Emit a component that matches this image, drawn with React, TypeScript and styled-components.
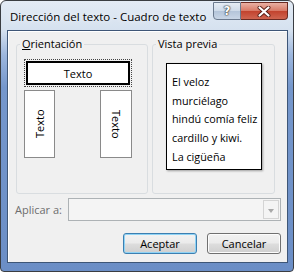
import styled, { createGlobalStyle } from "styled-components";

const GlobalStyle = createGlobalStyle`
  html, body {
    margin: 0;
    padding: 0;
    background: #ffffff;
  }
  body {
    font-family: "Open Sans", "Noto Sans", sans-serif;
    color: #000;
  }
`;

const previewLines = [
  "El veloz",
  "murciélago",
  "hindú comía feliz",
  "cardillo y kiwi.",
  "La cigüeña",
];

function CloseGlyph() {
  return (
    <svg width="14" height="11" viewBox="0 0 14 11">
      <path
        d="M2.5 1.5 L11.5 9.5 M11.5 1.5 L2.5 9.5"
        stroke="#5a2018"
        strokeWidth="4"
        strokeLinecap="round"
        fill="none"
      />
      <path
        d="M2.5 1.5 L11.5 9.5 M11.5 1.5 L2.5 9.5"
        stroke="#ffffff"
        strokeWidth="2.2"
        strokeLinecap="round"
        fill="none"
      />
    </svg>
  );
}

export default function App() {
  return (
    <>
      <GlobalStyle />
      <Window>
        <TitleBar>
          <Title>Dirección del texto - Cuadro de texto</Title>
          <Caption>
            <CaptionButton kind="help">?</CaptionButton>
            <CaptionButton kind="close">
              <CloseGlyph />
            </CaptionButton>
          </Caption>
        </TitleBar>

        <Client>
          <Groups>
            <Group $width={132}>
              <Legend>
                <u>O</u>rientación
              </Legend>
              <OrientGrid>
                <FocusRing>
                  <HorizontalChoice>Texto</HorizontalChoice>
                </FocusRing>
                <VerticalChoice $dir="up">Texto</VerticalChoice>
                <VerticalChoice $dir="down">Texto</VerticalChoice>
              </OrientGrid>
            </Group>

            <Group $width={123}>
              <Legend>Vista previa</Legend>
              <Preview>
                {previewLines.map((line) => (
                  <PreviewLine key={line}>{line}</PreviewLine>
                ))}
              </Preview>
            </Group>
          </Groups>

          <ApplyRow>
            <ApplyLabel>Aplicar a:</ApplyLabel>
            <Combo>
              <ComboArrow />
            </Combo>
          </ApplyRow>

          <Actions>
            <Button $primary>Aceptar</Button>
            <Button>Cancelar</Button>
          </Actions>
        </Client>
      </Window>
    </>
  );
}

const Window = styled.div`
  width: 294px;
  height: 272px;
  box-sizing: border-box;
  border: 1px solid #3a3d42;
  border-radius: 6px 6px 4px 4px;
  background: linear-gradient(
    180deg,
    #e3ebf5 0%,
    #d5e1ef 11%,
    #9db7de 20%,
    #7597cc 32%,
    #6b8ec6 100%
  );
  display: flex;
  flex-direction: column;
  padding: 0 5px 8px 6px;
  overflow: hidden;
`;

const TitleBar = styled.div`
  height: 29px;
  display: flex;
  justify-content: space-between;
  align-items: flex-start;
  padding-left: 3px;
`;

const Title = styled.div`
  font-size: 11.5px;
  line-height: 16px;
  margin-top: 8px;
  white-space: nowrap;
  text-shadow: 0 0 6px rgba(255, 255, 255, 0.9);
`;

const Caption = styled.div`
  display: flex;
  margin-top: 1px;
`;

const CaptionButton = styled.div<{ kind: "help" | "close" }>`
  width: ${({ kind }) => (kind === "help" ? "28px" : "47px")};
  height: 18px;
  box-sizing: border-box;
  border: 1px solid ${({ kind }) => (kind === "help" ? "#6b7a8e" : "#6a2a22")};
  border-radius: ${({ kind }) => (kind === "help" ? "0 0 0 4px" : "0 0 4px 0")};
  border-left-width: ${({ kind }) => (kind === "close" ? "0" : "1px")};
  background: ${({ kind }) =>
    kind === "help"
      ? "linear-gradient(180deg, #e6edf5 0%, #cfdbe9 48%, #b4c5da 52%, #c9d6e6 100%)"
      : "linear-gradient(180deg, #eab0a3 0%, #d87a67 48%, #c2432e 52%, #cf6550 100%)"};
  display: flex;
  align-items: center;
  justify-content: center;
  color: #fff;
  font-family: "DejaVu Sans", sans-serif;
  font-weight: bold;
  font-size: 12px;
  line-height: 1;
  text-shadow: 0 0 1px #333, 0 0 1px #333, 0 0 2px #444;
`;

const Client = styled.div`
  flex: 1;
  background: #f0f0f0;
  border: 1px solid #3e5677;
  box-shadow: inset 1px 1px 0 #ffffff;
  display: flex;
  flex-direction: column;
  padding: 6px 6px 0 7px;
`;

const Groups = styled.div`
  display: flex;
  gap: 4px;
  padding-left: 1px;
`;

const Group = styled.fieldset<{ $width: number }>`
  width: ${({ $width }) => $width}px;
  height: 157px;
  box-sizing: border-box;
  margin: 0;
  padding: 0;
  border: 1px solid #d9dde0;
  border-radius: 3px;
  min-width: 0;
`;

const Legend = styled.legend`
  font-size: 11px;
  line-height: 14px;
  padding: 0 2px;
  margin-left: 3px;
`;

const OrientGrid = styled.div`
  display: grid;
  grid-template-columns: 31px 1fr 32px;
  row-gap: 3px;
  width: 108px;
  margin: 8px 0 0 7px;
`;

const FocusRing = styled.div`
  grid-column: 1 / -1;
  height: 28px;
  box-sizing: border-box;
  border: 1px dotted #444;
  padding: 1px;
`;

const HorizontalChoice = styled.div`
  height: 100%;
  box-sizing: border-box;
  border: 2px solid #000;
  background: #fff;
  display: flex;
  align-items: center;
  justify-content: center;
  font-size: 11px;
`;

const VerticalChoice = styled.div<{ $dir: "up" | "down" }>`
  grid-column: ${({ $dir }) => ($dir === "up" ? 1 : 3)};
  height: 68px;
  box-sizing: border-box;
  border: 1px solid #8a8a8a;
  background: #fff;
  display: flex;
  align-items: center;
  justify-content: center;
  writing-mode: vertical-rl;
  transform: ${({ $dir }) => ($dir === "up" ? "rotate(180deg)" : "none")};
  font-size: 11px;
`;

const Preview = styled.div`
  width: 96px;
  height: 107px;
  box-sizing: border-box;
  margin: 12px 0 0 13px;
  border: 1px solid #000;
  background: #fff;
  box-shadow: 1px 1px 2px rgba(0, 0, 0, 0.35);
  padding: 9px 0 0 5px;
  overflow: hidden;
`;

const PreviewLine = styled.div`
  font-size: 10.8px;
  line-height: 18.7px;
  white-space: nowrap;
`;

const ApplyRow = styled.div`
  display: flex;
  align-items: center;
  margin-top: 4px;
  height: 23px;
`;

const ApplyLabel = styled.div`
  width: 53px;
  font-size: 11px;
  color: #6d6d6d;
`;

const Combo = styled.div`
  flex: 1;
  height: 23px;
  box-sizing: border-box;
  border: 1px solid #adb2b5;
  background: #f4f4f4;
  display: flex;
  justify-content: flex-end;
  padding: 1px;
`;

const ComboArrow = styled.div`
  width: 16px;
  box-sizing: border-box;
  border: 1px solid #d4d4d4;
  background: #f4f4f4;
  position: relative;

  &::after {
    content: "";
    position: absolute;
    left: 4px;
    top: 8px;
    border-left: 3.5px solid transparent;
    border-right: 3.5px solid transparent;
    border-top: 4px solid #a8a8a8;
  }
`;

const Actions = styled.div`
  display: flex;
  justify-content: flex-end;
  gap: 10px;
  margin-top: 12px;
`;

const Button = styled.div<{ $primary?: boolean }>`
  width: 74px;
  height: 21px;
  box-sizing: border-box;
  border: 1px solid ${({ $primary }) => ($primary ? "#3c7fb1" : "#707070")};
  border-radius: 3px;
  background: linear-gradient(180deg, #f2f2f2 0%, #ebebeb 48%, #dddddd 52%, #cfcfcf 100%);
  box-shadow: ${({ $primary }) =>
    $primary ? "inset 0 0 0 1px #8fd3f5" : "inset 0 0 0 1px #fcfcfc"};
  display: flex;
  align-items: center;
  justify-content: center;
  font-size: 11px;
`;
